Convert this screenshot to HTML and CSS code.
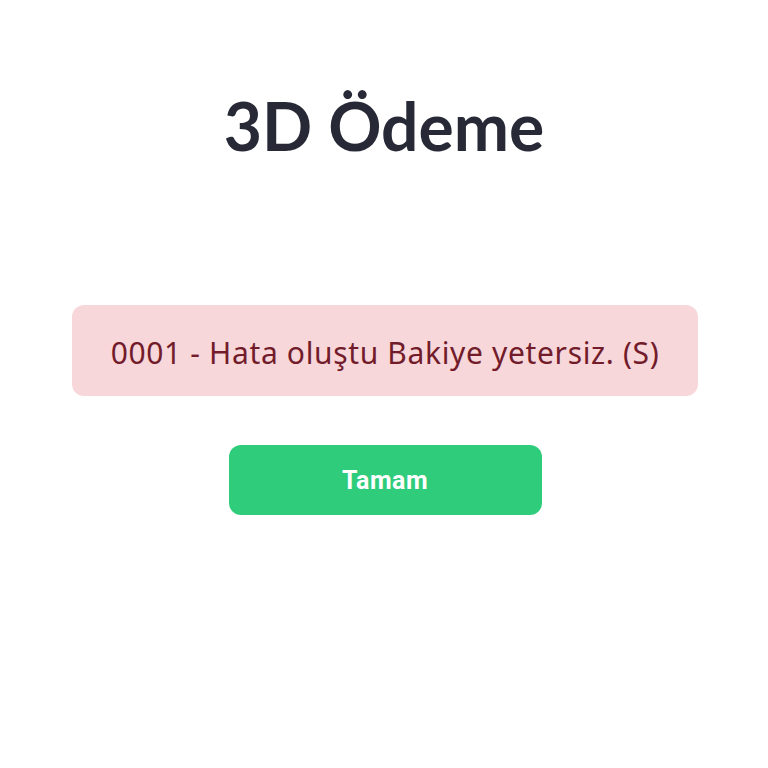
FILE: index.html
```html
<!DOCTYPE html>
<html>
    <head>
        <title>3D Ödeme</title>
        <link rel="stylesheet" href="styles.css">
    </head>
    <body>
        <div class="page">
            <h1 class="title">3D Ödeme</h1>

            <div class="alertBox">
                0001 - Hata oluştu Bakiye yetersiz. (S)
            </div>

            <button class="okButton">Tamam</button>
        </div>
    </body>
</html>
```

FILE: styles.css
```css
body {
    margin: 0;
    background-color: #ffffff;
    font-family: "Lato", "Noto Sans", sans-serif;
}
.page {
    display: flex;
    flex-direction: column;
    align-items: center;
    padding-top: 86px;
}
.title {
    margin: 0;
    font-family: "Lato", sans-serif;
    font-size: 66px;
    font-weight: 700;
    line-height: 80px;
    color: #272a36;
}
.alertBox {
    margin-top: 139px;
    width: 626px;
    height: 91px;
    box-sizing: border-box;
    display: flex;
    align-items: center;
    justify-content: center;
    padding-top: 3px;
    margin-left: 2px;
    background-color: #f8d7da;
    color: #721c2b;
    border-radius: 12px;
    font-family: "Noto Sans", sans-serif;
    font-size: 30px;
    letter-spacing: 0.65px;
}
.okButton {
    margin-top: 49px;
    margin-left: 2px;
    width: 313px;
    height: 70px;
    border: none;
    border-radius: 12px;
    background-color: #2ecc7b;
    color: #ffffff;
    font-family: "Roboto", sans-serif;
    font-size: 25px;
    font-weight: 700;
    letter-spacing: 0.5px;
    cursor: pointer;
}
```
